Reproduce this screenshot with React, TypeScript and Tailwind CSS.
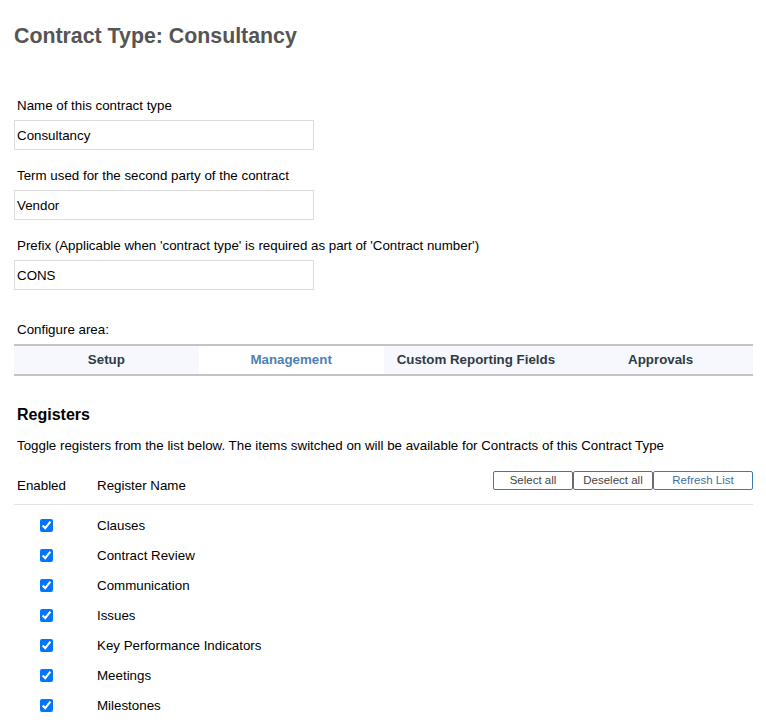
import React from "react";

const registers = [
  "Clauses",
  "Contract Review",
  "Communication",
  "Issues",
  "Key Performance Indicators",
  "Meetings",
  "Milestones",
];

const tabs = ["Setup", "Management", "Custom Reporting Fields", "Approvals"];

function Field({ label, value }: { label: string; value: string }) {
  return (
    <div className="flex flex-col">
      <label className="pl-[3px] text-[13.33px] leading-[15px] text-black">{label}</label>
      <div className="mt-[7px] flex h-[30px] w-[300px] items-center border border-[#dcdcdc] pl-[2px] pt-[1px] text-[13.33px] text-black">
        {value}
      </div>
    </div>
  );
}

export default function App() {
  return (
    <div
      className="min-h-[723px] bg-white pl-[14px] pr-[13px] text-black"
      style={{ fontFamily: '"Liberation Sans", Arial, sans-serif' }}
    >
      <h1 className="pt-[24px] text-[21.33px] font-bold leading-[24px] text-[#555555]">
        Contract Type: Consultancy
      </h1>

      <div className="mt-[50px] flex flex-col gap-[18px]">
        <Field label="Name of this contract type" value="Consultancy" />
        <Field label="Term used for the second party of the contract" value="Vendor" />
        <Field
          label="Prefix (Applicable when 'contract type' is required as part of 'Contract number')"
          value="CONS"
        />
      </div>

      <div className="mt-[32px] pl-[3px] text-[13.33px] leading-[15px]">Configure area:</div>
      <div className="mt-[7px] grid grid-cols-4 border-y-2 border-[#c4c4c4] bg-[#f6f8fd]">
        {tabs.map((t) => (
          <div
            key={t}
            className={
              t === "Management"
                ? "flex h-[28px] items-center justify-center bg-white text-[13.33px] font-bold text-[#4f81b5]"
                : "flex h-[28px] items-center justify-center text-[13.33px] font-bold text-[#2f3b45]"
            }
          >
            {t}
          </div>
        ))}
      </div>

      <h2 className="mt-[30px] pl-[3px] text-[16px] font-bold leading-[18px]">Registers</h2>
      <p className="mt-[14px] pl-[3px] text-[13.33px] leading-[15px]">
        Toggle registers from the list below. The items switched on will be available for Contracts
        of this Contract Type
      </p>

      <div className="mt-[18px] flex items-end border-b border-[#e2e2e2] pb-[11px]">
        <div className="w-[83px] pl-[3px] text-[13.33px] leading-[15px]">Enabled</div>
        <div className="text-[13.33px] leading-[15px]">Register Name</div>
        <div className="ml-auto mb-[3px] flex">
          <button className="h-[19px] w-[80px] rounded-[2px] border border-[#6b6b6b] bg-white text-[11.5px] text-[#444]">
            Select all
          </button>
          <button className="h-[19px] w-[80px] rounded-[2px] border border-[#6b6b6b] bg-white text-[11.5px] text-[#444]">
            Deselect all
          </button>
          <button className="h-[19px] w-[100px] rounded-[2px] border border-[#3f7bb3] bg-white text-[11.5px] text-[#3f6f9f]">
            Refresh List
          </button>
        </div>
      </div>

      <div className="mt-[5px] flex flex-col">
        {registers.map((r) => (
          <div key={r} className="flex h-[30px] items-center">
            <div className="flex w-[83px] pl-[26px]">
              <input type="checkbox" defaultChecked className="m-0 h-[13px] w-[13px]" />
            </div>
            <span className="text-[13.33px] leading-[15px]">{r}</span>
          </div>
        ))}
      </div>
    </div>
  );
}
